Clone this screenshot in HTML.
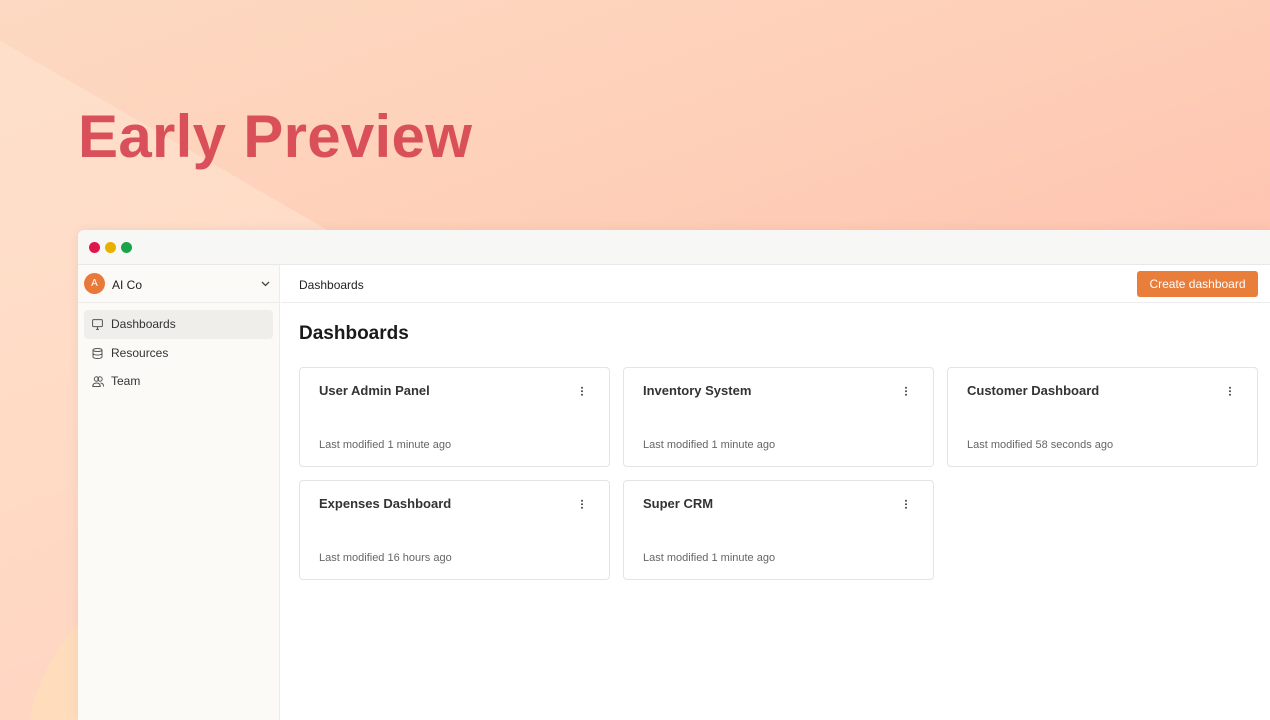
<!DOCTYPE html>
<html><head><style>
*{box-sizing:border-box;margin:0;padding:0}
html,body{width:1270px;height:720px;overflow:hidden}
body{position:relative;font-family:"Liberation Sans",sans-serif;
background:linear-gradient(160deg,#fdd9c2 0%,#fecfb8 35%,#ffc0ae 70%,#ffb59c 100%);}
.bg{position:absolute;left:0;top:0;width:1270px;height:720px;overflow:hidden}
.blob{position:absolute;left:-420px;top:120px;width:900px;height:800px;background:rgba(255,232,212,0.5);transform:rotate(30deg);border-radius:50px}
.blob2{position:absolute;left:25px;top:560px;width:400px;height:400px;border-radius:50%;background:#ffdcbb}
h1{position:absolute;left:78px;top:102px;font-size:60px;font-weight:bold;color:#d9505a;letter-spacing:0.3px}
.win{position:absolute;left:78px;top:230px;width:1192px;height:490px;background:#fff;border-radius:6px 0 0 0;overflow:hidden;box-shadow:0 0 12px rgba(0,0,0,0.06)}
.tb{height:35px;background:#f7f7f6;border-bottom:1px solid #e8e8e8;position:relative}
.dot{position:absolute;top:12px;width:11px;height:11px;border-radius:50%}
.side{position:absolute;left:0;top:35px;width:202px;bottom:0;background:#fbfaf7;border-right:1px solid #ececec}
.org{height:38px;border-bottom:1px solid #ececec;position:relative;font-size:12px;color:#222}
.av{position:absolute;left:6px;top:8px;width:21px;height:21px;border-radius:50%;background:#e9793a;color:#fff;font-size:10px;text-align:center;line-height:21px}
.nav{position:absolute;left:6px;width:189px;height:29px;border-radius:4px;font-size:12px;color:#333;line-height:29px;padding-left:27px}
.nav svg{position:absolute;left:8px;top:9px}
.main{position:absolute;left:203px;top:35px;right:0;bottom:0}
.hdr{height:38px;border-bottom:1px solid #ececec;position:relative;font-size:12px;color:#222}
.btn{position:absolute;right:12px;top:6px;width:121px;height:26px;background:#e97d3a;border-radius:3px;color:#fff;font-size:12px;text-align:center;line-height:26px}
.card{position:absolute;width:311px;height:100px;border:1px solid #e4e4e4;border-radius:4px;background:#fff}
.card b{position:absolute;left:19px;top:15px;font-size:13px;font-weight:bold;color:#333}
.card span{position:absolute;left:19px;top:71px;font-size:11px;color:#666}
.card i{position:absolute;right:26px;top:18px;width:2px;height:10px;background:radial-gradient(circle,#555 0.9px,transparent 1.1px) 0 0/2px 3.5px repeat-y}
</style></head><body>
<div class="bg"><div class="blob"></div><div class="blob2"></div></div>
<h1>Early Preview</h1>
<div class="win">
<div class="tb"><div class="dot" style="left:11px;background:#e0174a"></div><div class="dot" style="left:27px;background:#e9b000"></div><div class="dot" style="left:43px;background:#1aa34a"></div></div>
<div class="side">
<div class="org"><div class="av">A</div><div style="position:absolute;left:34px;top:13px">AI Co</div>
<svg style="position:absolute;left:183px;top:16px" width="9" height="6" viewBox="0 0 9 6"><path d="M1 1l3.5 3.5L8 1" fill="none" stroke="#444" stroke-width="1.3"/></svg></div>
<div class="nav" style="top:45px;background:#efeeeb"><svg width="11" height="11" viewBox="0 0 11 11"><rect x="0.6" y="0.6" width="9.8" height="7" rx="1" fill="none" stroke="#555"/><path d="M4 10.4h3M5.5 7.6v2.8" stroke="#555"/></svg>Dashboards</div>
<div class="nav" style="top:74px"><svg width="11" height="11" viewBox="0 0 11 11"><ellipse cx="5.5" cy="2" rx="4.5" ry="1.5" fill="none" stroke="#555"/><path d="M1 2v7c0 .8 2 1.5 4.5 1.5S10 9.8 10 9V2M1 5.5c0 .8 2 1.5 4.5 1.5S10 6.3 10 5.5" fill="none" stroke="#555"/></svg>Resources</div>
<div class="nav" style="top:102px"><svg width="12" height="11" viewBox="0 0 12 11"><circle cx="4.5" cy="3" r="2.2" fill="none" stroke="#555"/><circle cx="8" cy="3" r="2.2" fill="none" stroke="#555"/><path d="M0.8 10.5c0-2.5 1.5-3.5 3.7-3.5s3.7 1 3.7 3.5zM8.5 7c2 0 3 1 3 3.5" fill="none" stroke="#555"/></svg>Team</div>
</div>
<div class="main">
<div class="hdr"><div style="position:absolute;left:18px;top:13px">Dashboards</div><div class="btn">Create dashboard</div></div>
<div style="position:absolute;left:18px;top:58px;font-size:19px;font-weight:bold;color:#1a1a1a">Dashboards</div>
<div class="card" style="left:18px;top:102px"><b>User Admin Panel</b><i></i><span>Last modified 1 minute ago</span></div>
<div class="card" style="left:342px;top:102px"><b>Inventory System</b><i></i><span>Last modified 1 minute ago</span></div>
<div class="card" style="left:666px;top:102px"><b>Customer Dashboard</b><i></i><span>Last modified 58 seconds ago</span></div>
<div class="card" style="left:18px;top:215px"><b>Expenses Dashboard</b><i></i><span>Last modified 16 hours ago</span></div>
<div class="card" style="left:342px;top:215px"><b>Super CRM</b><i></i><span>Last modified 1 minute ago</span></div>
</div>
</div>
</body></html>
